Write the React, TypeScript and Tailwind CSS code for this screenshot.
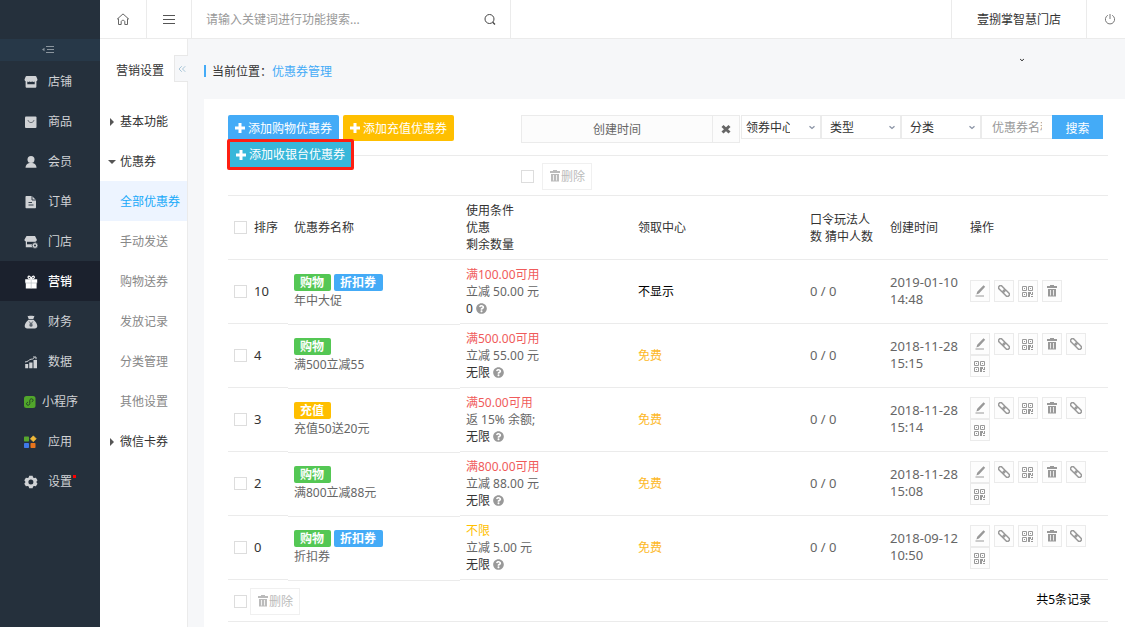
import React from "react";
import { FaQuestionCircle } from "react-icons/fa";
import { FiChevronsLeft } from "react-icons/fi";

type IconProps = { className?: string };

const ShopIcon = () => (
  <svg viewBox="0 0 14 14" className="w-3.5 h-3.5" fill="currentColor">
    <path d="M2.6 1h8.800c.5 0 .8.2 1 .7l1 2.600c.2 1-.3 1.700-1 1.900v5.300c0 .8-.5 1.300-1.300 1.300H2.900c-.8 0-1.300-.5-1.300-1.300V6.200c-.7-.2-1.200-.9-1-1.900l1-2.600c.2-.5.500-.7 1-.7z" />
    <path
      d="M3.300 6.600c.6.600 1.600.6 2.300 0 .7.600 1.900.6 2.600 0 .7.600 1.700.6 2.500 0v2.600H3.300z"
      fill="#25303c"
    />
  </svg>
);

const BagIcon = () => (
  <svg viewBox="0 0 14 14" className="w-3.5 h-3.5">
    <rect x="1" y="1.500" width="11.500" height="11.500" rx="1" fill="currentColor" />
    <path d="M4 5c.5 3.400 5.500 3.400 6 0" fill="none" stroke="#6d737a" />
  </svg>
);

const UserIcon = () => (
  <svg viewBox="0 0 14 14" className="w-3.5 h-3.5" fill="currentColor">
    <circle cx="7" cy="4.600" r="3.500" />
    <path d="M1.500 12.800c0-2.700 1.800-4.300 4-4.700h3c2.200.4 4 2 4 4.700z" />
  </svg>
);

const OrderIcon = () => (
  <svg viewBox="0 0 14 14" className="w-3.5 h-3.5">
    <path d="M2.500 1H8l4 4v7.200c0 .6-.4 1-1 1H2.500c-.6 0-1-.4-1-1V2c0-.6.4-1 1-1z" fill="currentColor" />
    <path d="M8 1v4h4M4.500 7.500h3.500M4.500 10h5" fill="none" stroke="#25303c" strokeWidth=".9" />
  </svg>
);

const StoreIcon = () => (
  <svg viewBox="0 0 14 14" className="w-3.5 h-3.5">
    <path d="M2.500 1h8.500l1.800 3.500c.2 1-.4 1.800-1.300 1.800v6H1.800v-6C.9 6.300.3 5.500.5 4.500z" fill="currentColor" />
    <path d="M3 6.800h8v2.500H3z" fill="#25303c" />
    <circle cx="11" cy="10.500" r="2.900" fill="currentColor" stroke="#25303c" strokeWidth=".7" />
    <circle cx="11" cy="10.500" r="1" fill="#25303c" />
  </svg>
);

const GiftIcon = () => (
  <svg viewBox="0 0 14 14" className="w-3.5 h-3.5">
    <path d="M1.200 4.200H13.200v3.600H1.200zM1.800 7.800h10.800v5.700H1.800z" fill="currentColor" />
    <path
      d="M7.200 4C5 4.200 3.500 3 4.200 1.600 5 .4 6.800 1.600 7.200 4c.4-2.400 2.200-3.600 3-2.400.7 1.400-.8 2.600-3 2.400z"
      fill="none"
      stroke="currentColor"
      strokeWidth="1.200"
    />
    <path d="M7.200 4.500v9M1.200 8h12" stroke="#b4b8be" strokeWidth=".6" />
  </svg>
);

const MoneyIcon = () => (
  <svg viewBox="0 0 14 14" className="w-3.5 h-3.5">
    <path
      d="M3.500.8c1.200.5 2 0 3.500 0s2.300.5 3.500 0L9.300 4H4.700zM4.500 4.700h5c2.200 1.700 3.800 4.300 3.800 6.300 0 1.500-1 2.500-2.500 2.500H3.200C1.700 13.500.7 12.500.7 11c0-2 1.600-4.600 3.800-6.300z"
      fill="currentColor"
    />
    <path d="M5.200 6.500L7 8.800l1.800-2.300M7 8.800V12M5.300 9.200h3.400M5.300 10.700h3.400" fill="none" stroke="#25303c" strokeWidth=".7" />
  </svg>
);

const DataIcon = () => (
  <svg viewBox="0 0 14 14" className="w-3.5 h-3.5">
    <path d="M1.200 9H4.200V13.300H1.200zM5.200 7.500H8.500v5.800H5.200zM9.500 5H13v8.300H9.500z" fill="currentColor" />
    <path d="M1 7C4 7 5 4.500 7 4.200c1.500-.2 2 .3 3.500-1.700M9 2h3v2.300" fill="none" stroke="currentColor" />
  </svg>
);

const MiniAppIcon = () => (
  <svg viewBox="0 0 14 14" className="w-3.5 h-3.5">
    <rect x="0" y="1" width="11.500" height="12" rx="2.500" fill="#51a62b" />
    <path
      d="M3.900 7.200c-1.300.2-1.900 1.800-.9 2.600 1.200.9 2.800.1 2.800-1.200V5.400c0-1.400 1.700-2.100 2.800-1.200 1 .9.400 2.400-.9 2.600"
      fill="none"
      stroke="#1f3a26"
      strokeWidth=".9"
    />
  </svg>
);

const AppsIcon = () => (
  <svg viewBox="0 0 14 14" className="w-3.5 h-3.5">
    <rect x="0" y="1.500" width="5" height="5" rx=".7" fill="#57a62e" />
    <path d="M9.300.8l3 3-3 3-3-3z" fill="#f0b93a" stroke="#f0b93a" strokeLinejoin="round" strokeWidth=".6" />
    <rect x="0" y="8" width="5" height="5" rx=".7" fill="#3f78e8" />
    <rect x="6.500" y="8" width="5" height="5" rx=".7" fill="#e8741c" />
  </svg>
);

const GearIcon = () => (
  <svg viewBox="0 0 14 14" className="w-3.5 h-3.5">
    <path
      d="M5.200.8h3.400l.5 1.700 1 .6 1.800-.4 1.600 2.600L12.300 7l1.200 1.700-1.600 2.600-1.800-.4-1 .6-.5 1.700H5.200l-.5-1.700-1-.6-1.800.4L.3 8.700 1.500 7 .3 5.300l1.600-2.600 1.800.4 1-.6z"
      fill="currentColor"
    />
    <circle cx="6.900" cy="7" r="2.500" fill="#25303c" />
  </svg>
);

const HomeIcon = () => (
  <svg viewBox="0 0 14 14" className="w-3.5 h-3.5" fill="none" stroke="#666">
    <path d="M2.500 6.500v6h2.700V9.800c0-2 3.600-2 3.600 0v2.700h2.700v-6M1 7.300l6-5.400 6 5.400" />
  </svg>
);

const TrashIcon = ({ className = "w-3 h-3" }: IconProps) => (
  <svg viewBox="0 0 12 12" className={className}>
    <path d="M4 0h4v1h3v2H1V1h3zM2 4h8v7.500H2z" fill="currentColor" />
    <path d="M4.500 5v5.500M7.500 5v5.500" stroke="#fff" strokeWidth=".8" />
  </svg>
);

const EditIcon = () => (
  <svg viewBox="0 0 12 12" className="w-3 h-3" fill="currentColor">
    <path d="M9.500.3l1.700 1.500-6.200 6.600-2.600 1 .8-2.600zM1.500 10.500h8.500v1H1.500z" />
  </svg>
);

const LinkIcon = () => (
  <svg viewBox="0 0 12 12" className="w-3 h-3" fill="none" stroke="currentColor" strokeWidth="1.500">
    <rect x="-.8" y="4" width="7.500" height="4" rx="2" transform="rotate(45 6 6)" />
    <rect x="5.300" y="4" width="7.500" height="4" rx="2" transform="rotate(45 6 6)" />
  </svg>
);

const QrIcon = () => (
  <svg viewBox="0 0 12 12" className="w-3 h-3" fill="none" stroke="currentColor">
    <path d="M.5 1.500h4v4h-4zM6.500 1.500h4v4h-4zM.5 7.500h4v4h-4z" />
    <path d="M2 3.500h1M8 3.500h1M2 9.500h1" />
    <path d="M6 7h3v2H8v3H6zM10 7h1v3h-2V9h1zM9 11h2v1H9z" fill="currentColor" stroke="none" />
  </svg>
);

const PlusIcon = () => (
  <svg viewBox="0 0 10 10" className="w-2.5 h-2.5" stroke="currentColor" strokeWidth="3">
    <path d="M5 0v10M0 5h10" />
  </svg>
);

const Chevron = ({ className }: IconProps) => (
  <svg viewBox="0 0 8 5" className={className} fill="none" stroke="currentColor">
    <path d="M1.500 1.300L4 3.500l2.500-2.200" strokeWidth="1.300" />
  </svg>
);

const menu = [
  { name: "店铺", icon: <ShopIcon /> },
  { name: "商品", icon: <BagIcon /> },
  { name: "会员", icon: <UserIcon /> },
  { name: "订单", icon: <OrderIcon /> },
  { name: "门店", icon: <StoreIcon /> },
  { name: "营销", icon: <GiftIcon />, active: true },
  { name: "财务", icon: <MoneyIcon /> },
  { name: "数据", icon: <DataIcon /> },
  { name: "小程序", icon: <MiniAppIcon /> },
  { name: "应用", icon: <AppsIcon /> },
  { name: "设置", icon: <GearIcon />, dot: true },
];

const subMenu = [
  { name: "基本功能", group: "closed" },
  { name: "优惠券", group: "open" },
  { name: "全部优惠券", active: true },
  { name: "手动发送" },
  { name: "购物送券" },
  { name: "发放记录" },
  { name: "分类管理" },
  { name: "其他设置" },
  { name: "微信卡券", group: "closed" },
];

const coupons = [
  { sort: 10, tags: ["购物", "折扣券"], name: "年中大促", limit: "满100.00可用", offer: "立减 50.00 元", left: "0", center: "不显示", date: "2019-01-10", time: "14:48" },
  { sort: 4, tags: ["购物"], name: "满500立减55", limit: "满500.00可用", offer: "立减 55.00 元", left: "无限", center: "免费", date: "2018-11-28", time: "15:15" },
  { sort: 3, tags: ["充值"], name: "充值50送20元", limit: "满50.00可用", offer: "返 15% 余额;", left: "无限", center: "免费", date: "2018-11-28", time: "15:14" },
  { sort: 2, tags: ["购物"], name: "满800立减88元", limit: "满800.00可用", offer: "立减 88.00 元", left: "无限", center: "免费", date: "2018-11-28", time: "15:08" },
  { sort: 0, tags: ["购物", "折扣券"], name: "折扣券", limit: "不限", offer: "立减 5.00 元", left: "无限", center: "免费", date: "2018-09-12", time: "10:50" },
];

const tagColor: Record<string, string> = {
  购物: "bg-[#54c754]",
  折扣券: "bg-[#44abf7]",
  充值: "bg-[#ffbf00]",
};

const filters = [
  { label: "领券中心", pad: "pl-1" },
  { label: "类型", pad: "pl-2" },
  { label: "分类", pad: "pl-2" },
];

const actions = [
  { label: "编辑", icon: <EditIcon /> },
  { label: "链接", icon: <LinkIcon /> },
  { label: "二维码", icon: <QrIcon /> },
  { label: "删除", icon: <TrashIcon /> },
  { label: "领取链接", icon: <LinkIcon /> },
  { label: "领取二维码", icon: <QrIcon /> },
];

const Check = ({ label }: { label: string }) => (
  <input
    type="checkbox"
    aria-label={label}
    className="appearance-none block shrink-0 w-[13px] h-[13px] border border-[#ddd] bg-white checked:bg-[#44abf7]"
  />
);

const DeleteButton = () => (
  <button className="flex items-center justify-center w-[50px] h-[27px] border border-[#f0f0f0] text-[#bbb]">
    <TrashIcon />
    删除
  </button>
);

const Sidebar = () => (
  <nav className="w-[100px] shrink-0 bg-[#25303c] text-[#d0d2d5]">
    <div className="h-[39px]" />
    <button aria-label="收起菜单" className="flex w-full h-[22px] items-center justify-center pr-1 bg-[#273848] text-[#8b959e]">
      <svg viewBox="0 0 12 8" className="w-3 h-2" fill="none" stroke="currentColor">
        <path d="M4 .5h8M5 3.500h7M4 6.500h8" />
        <path d="M0 3.500l2.500-1.800v3.600z" fill="currentColor" stroke="none" />
      </svg>
    </button>
    {menu.map(({ name, icon, active, dot }) => (
      <a
        key={name}
        href="#"
        className={`flex items-center h-10 pl-6 pt-px ${active ? "bg-[#1b212d] text-white font-medium" : ""}`}>
        {icon}
        <span className={`relative ${name.length > 2 ? "ml-1" : "ml-2.5"}`}>
          {name}
          {dot && <i className="absolute top-0.5 -right-1 w-[3px] h-[3px] bg-[#f00]" />}
        </span>
      </a>
    ))}
  </nav>
);

const SubSidebar = () => (
  <aside className="w-[88px] shrink-0 bg-white border-r border-[#ebebeb]">
    <div className="relative flex items-center h-[62px] pl-4 text-[#333]">
      营销设置
      <button
        aria-label="收起"
        className="absolute top-4 -right-px flex items-center justify-center w-3.5 h-[27px] bg-[#f6f7f9] border border-r-0 border-[#e8e8e8] text-[#a9c6d8]">
        <FiChevronsLeft className="w-3 h-3 shrink-0" />
      </button>
    </div>
    {subMenu.map(({ name, group, active }) => (
      <a
        key={name}
        href="#"
        className={`flex items-center h-10 pt-px ${
          active ? "bg-[#edf4ff] text-[#18a9f9]" : group ? "text-[#333]" : "text-[#888]"
        }`}>
        <span className="w-5 shrink-0 pl-2">
          {group === "closed" && (
            <svg viewBox="0 0 8 8" className="w-2 h-2" fill="#555">
              <path d="M2 0l4 4-4 4z" />
            </svg>
          )}
          {group === "open" && (
            <svg viewBox="0 0 8 8" className="w-2 h-2" fill="#555">
              <path d="M0 2h8L4 6z" />
            </svg>
          )}
        </span>
        {name}
      </a>
    ))}
  </aside>
);

const Header = () => (
  <header className="flex h-[39px] bg-white border-b border-[#ebebeb] text-[#333]">
    <button aria-label="首页" className="flex items-center justify-center w-[47px] border-r border-[#ebebeb]">
      <HomeIcon />
    </button>
    <button aria-label="菜单" className="flex items-center justify-center w-[45px] border-r border-[#ebebeb]">
      <svg viewBox="0 0 12 10" className="w-3 h-2.5" stroke="#555">
        <path d="M0 1.500h12M0 5.500h12M0 9.500h12" />
      </svg>
    </button>
    <div className="flex items-center w-[319px] px-3.5 border-r border-[#ebebeb]">
      <input
        aria-label="功能搜索"
        placeholder="请输入关键词进行功能搜索..."
        className="flex-1 min-w-0 h-full outline-none placeholder:text-[#999]"
      />
      <button aria-label="搜索功能">
        <svg viewBox="0 0 12 12" className="w-3 h-3" fill="none" stroke="#444">
          <circle cx="5.500" cy="6" r="4.500" />
          <path d="M8.700 9.200l2.300 2.300" strokeWidth="1.300" />
        </svg>
      </button>
    </div>
    <div className="relative flex items-center justify-center w-[135px] ml-auto border-l border-[#ebebeb]">
      <button>壹捌掌智慧门店</button>
      <Chevron className="absolute top-full left-1/2 mt-5 w-1.5 h-1 text-[#222]" />
    </div>
    <button aria-label="退出" className="flex items-center justify-center w-[39px] pl-2 border-l border-[#ebebeb]">
      <svg viewBox="0 0 12 12" className="w-3 h-3" fill="none" stroke="#777">
        <path d="M3.800 2.300a4.600 4.600 0 1 0 4.400 0M6 1v5" />
      </svg>
    </button>
  </header>
);

const AddButton = ({ children, className }: { children: React.ReactNode; className: string }) => (
  <button className={`flex items-center justify-center gap-[3px] rounded-xs text-white ${className}`}>
    <PlusIcon />
    {children}
  </button>
);

const Toolbar = () => (
  <div className="flex items-start h-[41px] border-b border-[#ebebeb]">
    {/* the third button wraps and hangs over the divider */}
    <div className="flex flex-wrap gap-x-1 w-60">
      <AddButton className="w-[111px] h-[26px] bg-[#44abf7]">添加购物优惠券</AddButton>
      <AddButton className="w-[111px] h-[26px] bg-[#ffbf00]">添加充值优惠券</AddButton>
      <AddButton className="w-[127px] h-[31px] -mt-0.5 -ml-px border-3 border-[#fe1f12] bg-[#38b7da]">
        添加收银台优惠券
      </AddButton>
    </div>
    <div className="flex items-start flex-1 ml-[53px] pr-[5px]">
      <button className="flex-1 h-[28px] border border-[#ebebeb] bg-[#fcfcfc] text-[#666]">创建时间</button>
      <button
        aria-label="清除"
        className="flex items-center justify-center w-[27px] h-[28px] mr-px border border-l-0 border-[#ebebeb] bg-[#fcfcfc]">
        <svg viewBox="0 0 10 10" className="w-2.5 h-2.5" stroke="#666" strokeWidth="3">
          <path d="M1.500 2l7 6.500M8.500 2l-7 6.500" />
        </svg>
      </button>
      {filters.map(({ label, pad }) => (
        <span key={label} className="grid w-20">
          <select
            aria-label={label}
            className={`col-start-1 row-start-1 w-20 h-6 pr-[30px] border border-[#ebebeb] bg-white appearance-none text-[#333] ${pad}`}>
            <option>{label}</option>
          </select>
          <Chevron className="col-start-1 row-start-1 self-center justify-self-end mr-[5px] w-2 h-[5px] text-[#8a93a5] pointer-events-none" />
        </span>
      ))}
      <input
        aria-label="优惠券名称"
        placeholder="优惠券名称"
        className="w-[71px] h-6 px-2.5 border border-r-0 border-[#ebebeb] outline-none placeholder:text-[#999]"
      />
      <button className="w-[51px] h-6 pt-0.5 bg-[#44abf7] text-white">搜索</button>
    </div>
  </div>
);

const CouponTable = () => (
  <table className="w-full table-fixed border-separate border-spacing-0 text-left [&_td]:border-b [&_th]:border-b [&_td]:border-[#ebebeb] [&_th]:border-[#ebebeb] [&_td]:p-1.5 [&_th]:p-1.5 [&_td]:h-16 [&_th]:h-16 [&_th]:font-normal [&_th]:text-[#333]">
    <thead>
      <tr>
        <th className="w-[60px]">
          <div className="flex items-center gap-[7px] whitespace-nowrap">
            <Check label="全选" />
            排序
          </div>
        </th>
        <th>优惠券名称</th>
        <th>
          使用条件
          <br />
          优惠
          <br />
          剩余数量
        </th>
        <th>领取中心</th>
        <th className="w-20">
          口令玩法人
          <br />数 猜中人数
        </th>
        <th className="w-20">创建时间</th>
        <th className="w-36">操作</th>
      </tr>
    </thead>
    <tbody>
      {coupons.map(({ sort, tags, name, limit, offer, left, center, date, time }) => (
        <tr key={sort}>
          <td>
            <div className="flex items-center gap-[7px] text-[#333] text-[13px]">
              <Check label={name} />
              {sort}
            </div>
          </td>
          <td className="border-transparent! shadow-[0_1px_0_#ebebeb]">
            <div className="flex gap-[3px]">
              {tags.map((tag) => (
                <span key={tag} className={`pl-1.5 pr-[7px] rounded-xs text-white font-bold ${tagColor[tag]}`}>
                  {tag}
                </span>
              ))}
            </div>
            <div className="pt-px">{name}</div>
          </td>
          <td>
            <div className={limit === "不限" ? "text-[#ffbf00]" : "text-[#f05b5b]"}>{limit}</div>
            <div>{offer}</div>
            <div className="flex items-center gap-[3px] text-[#333]">
              {left}
              <FaQuestionCircle className="w-[11px] h-[11px] text-[#999]" />
            </div>
          </td>
          <td className={center === "免费" ? "text-[#fdb827]" : "text-black"}>{center}</td>
          <td className="text-[13px]">0 / 0</td>
          <td className="pt-1! text-[13px] whitespace-nowrap">
            {date}
            <br />
            {time}
          </td>
          <td className="pt-0! pb-px!">
            <div className="flex flex-wrap gap-x-1">
              {actions.slice(0, center === "免费" ? 6 : 4).map(({ label, icon }) => (
                <button
                  key={label}
                  aria-label={label}
                  className="flex items-center justify-center w-5 h-[22px] border border-[#ebebeb] bg-[#fdfdfd] text-[#999]">
                  {icon}
                </button>
              ))}
            </div>
          </td>
        </tr>
      ))}
    </tbody>
  </table>
);

const App = () => {
  return (
    <div className="flex min-h-screen bg-[#f6f7f9] text-[12px] leading-[17px] text-[#666] font-['Noto_Sans','Noto_Sans_CJK_SC',sans-serif]">
      <Sidebar />
      <div className="flex flex-col flex-1 min-w-0">
        <Header />
        <div className="flex flex-1">
          <SubSidebar />
          <main className="flex flex-col flex-1 min-w-0 pl-4">
            <div className="flex items-center h-[60px] pt-1 text-[#333]">
              <i className="w-0.5 h-3 mr-1.5 bg-[#44abf7]" />
              当前位置：
              <a href="#" className="text-[#44abf7]">
                优惠券管理
              </a>
            </div>
            <section className="flex-1 bg-white pt-4 pl-6 pr-[17px]">
              <Toolbar />
              <div className="flex items-center gap-2 h-10 pt-px pl-[293px] border-b border-[#ebebeb]">
                <Check label="选择全部" />
                <DeleteButton />
              </div>
              <CouponTable />
              <div className="flex items-center gap-[3px] h-[42px] pt-px pl-1.5 pr-[17px] border-b border-[#ebebeb]">
                <Check label="选择全部" />
                <DeleteButton />
                <span className="ml-auto pb-1 text-black">共5条记录</span>
              </div>
            </section>
          </main>
        </div>
      </div>
    </div>
  );
};

export default App;
